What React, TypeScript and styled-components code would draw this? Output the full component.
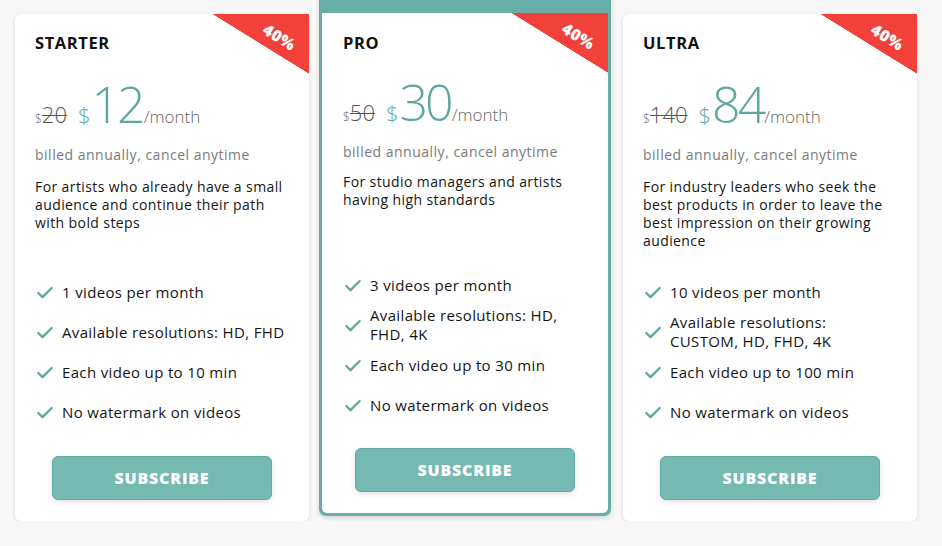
import React from "react";
import styled, { createGlobalStyle, css } from "styled-components";
import { Check } from "lucide-react";

const Global = createGlobalStyle`
  html, body { margin: 0; padding: 0; }
  body {
    background: #f7f7f7;
    font-family: "Open Sans", "DejaVu Sans", sans-serif;
    color: #151515;
    overflow: hidden;
  }
`;

const Row = styled.div`
  display: flex;
  align-items: flex-start;
  padding: 14px 0 0 15px;
  gap: 10px;
`;

const Card = styled.div<{ $featured?: boolean }>`
  position: relative;
  box-sizing: border-box;
  width: 294px;
  height: 507px;
  background: #fff;
  border-radius: 6px;
  box-shadow: 0 1px 4px rgba(0, 0, 0, 0.12);
  padding: 20px 20px 21px 20px;
  display: flex;
  flex-direction: column;
  ${(p) =>
    p.$featured &&
    css`
      width: 292px;
      height: auto;
      margin-top: -44px;
      margin-right: 2px;
      padding: 0;
      background: #66aea6;
      border-radius: 7px;
      box-shadow: 0 2px 5px rgba(0, 0, 0, 0.15);
    `}
`;

const Band = styled.div`
  height: 43px;
`;

const FeaturedBody = styled.div`
  position: relative;
  margin: 0 3px 3px 3px;
  background: #fff;
  border-radius: 0 0 5px 5px;
  padding: 21px 21px 21px 21px;
  height: 500px;
  box-sizing: border-box;
  display: flex;
  flex-direction: column;
`;

const Ribbon = styled.div`
  position: absolute;
  top: 0;
  right: 0;
  width: 97px;
  height: 60px;
  background: linear-gradient(to top right, transparent 50%, #f2403a 50.5%);
`;

const RibbonText = styled.span`
  position: absolute;
  right: 12px;
  top: 12px;
  transform: rotate(32deg);
  color: #fff;
  font-weight: 800;
  font-size: 16px;
  letter-spacing: 0.3px;
`;

const Title = styled.h2`
  margin: 0;
  font-size: 16.5px;
  line-height: 18px;
  font-weight: 700;
  color: #111;
  letter-spacing: 0.6px;
`;

const PriceRow = styled.div<{ $featured?: boolean }>`
  display: flex;
  align-items: baseline;
  margin-top: ${(p) => (p.$featured ? "24px" : "26px")};
  height: 52px;
  line-height: 52px;
  white-space: nowrap;
`;

const OldCur = styled.span`
  font-size: 12px;
  color: #666;
  font-weight: 300;
`;

const OldPrice = styled.span`
  font-size: 22px;
  color: #555;
  font-weight: 300;
  text-decoration: line-through;
  text-decoration-thickness: 1px;
  margin-right: 11px;
`;

const Cur = styled.span`
  font-size: 22px;
  color: #5ea79f;
  font-weight: 300;
  margin-right: 1px;
`;

const Amount = styled.span`
  font-size: 50px;
  color: #5ea79f;
  font-weight: 300;
  letter-spacing: -3px;
`;

const Per = styled.span`
  font-size: 17px;
  color: #666;
  font-weight: 300;
  margin-left: 1px;
`;

const Billed = styled.div<{ $featured?: boolean }>`
  margin-top: ${(p) => (p.$featured ? "15px" : "16px")};
  font-size: 14px;
  line-height: 18px;
  color: #7a7a7a;
  letter-spacing: 0.5px;
`;

const Desc = styled.p<{ $featured?: boolean }>`
  margin: ${(p) => (p.$featured ? "12px" : "14px")} 0 0 0;
  font-size: 14px;
  line-height: 18px;
  letter-spacing: 0.4px;
  color: #151515;
  height: ${(p) => (p.$featured ? "92px" : "95px")};
`;

const Features = styled.ul`
  list-style: none;
  margin: 0;
  padding: 0;
`;

const Feature = styled.li`
  display: flex;
  align-items: center;
  gap: 7px;
  height: 40px;
  font-size: 15px;
  line-height: 19px;
  letter-spacing: 0.35px;
  color: #151515;

  svg {
    flex: none;
    color: #5ea79f;
    margin-top: 2px;
  }
`;

const Button = styled.button<{ $featured?: boolean }>`
  display: block;
  margin: ${(p) => (p.$featured ? "23px" : "24px")} auto 0 auto;
  width: 220px;
  height: 44px;
  border-radius: 6px;
  border: 1px solid #62aaa2;
  background: #76b9b1;
  color: #fff;
  font-family: inherit;
  font-weight: 800;
  font-size: 16px;
  letter-spacing: 0.8px;
  box-shadow: 0 2px 6px rgba(0, 0, 0, 0.12);
  cursor: pointer;
`;

type Plan = {
  name: string;
  old: string;
  price: string;
  desc: string;
  features: string[];
  featured?: boolean;
};

const plans: Plan[] = [
  {
    name: "STARTER",
    old: "20",
    price: "12",
    desc: "For artists who already have a small audience and continue their path with bold steps",
    features: [
      "1 videos per month",
      "Available resolutions: HD, FHD",
      "Each video up to 10 min",
      "No watermark on videos",
    ],
  },
  {
    name: "PRO",
    old: "50",
    price: "30",
    desc: "For studio managers and artists having high standards",
    features: [
      "3 videos per month",
      "Available resolutions: HD, FHD, 4K",
      "Each video up to 30 min",
      "No watermark on videos",
    ],
    featured: true,
  },
  {
    name: "ULTRA",
    old: "140",
    price: "84",
    desc: "For industry leaders who seek the best products in order to leave the best impression on their growing audience",
    features: [
      "10 videos per month",
      "Available resolutions: CUSTOM, HD, FHD, 4K",
      "Each video up to 100 min",
      "No watermark on videos",
    ],
  },
];

function Content({ plan }: { plan: Plan }) {
  const f = plan.featured;
  return (
    <>
      <Ribbon>
        <RibbonText>40%</RibbonText>
      </Ribbon>
      <Title>{plan.name}</Title>
      <PriceRow $featured={f}>
        <OldCur>$</OldCur>
        <OldPrice>{plan.old}</OldPrice>
        <Cur>$</Cur>
        <Amount>{plan.price}</Amount>
        <Per>/month</Per>
      </PriceRow>
      <Billed $featured={f}>billed annually, cancel anytime</Billed>
      <Desc $featured={f}>{plan.desc}</Desc>
      <Features>
        {plan.features.map((t) => (
          <Feature key={t}>
            <Check size={20} strokeWidth={2.8} />
            <span>{t}</span>
          </Feature>
        ))}
      </Features>
      <Button $featured={f}>SUBSCRIBE</Button>
    </>
  );
}

export default function App() {
  return (
    <>
      <Global />
      <Row>
        {plans.map((p) =>
          p.featured ? (
            <Card key={p.name} $featured>
              <Band />
              <FeaturedBody>
                <Content plan={p} />
              </FeaturedBody>
            </Card>
          ) : (
            <Card key={p.name}>
              <Content plan={p} />
            </Card>
          )
        )}
      </Row>
    </>
  );
}
